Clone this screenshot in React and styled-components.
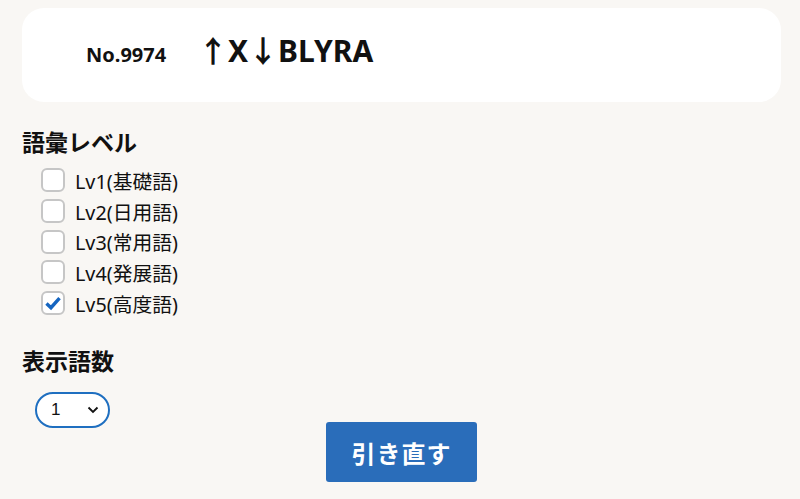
import styled, { createGlobalStyle } from "styled-components";

const GlobalStyle = createGlobalStyle`
  html, body {
    margin: 0;
    padding: 0;
    background: #f9f7f4;
  }
  body {
    font-family: "Noto Sans", "Noto Sans CJK JP", sans-serif;
    color: #111;
  }
`;

const Page = styled.div`
  padding: 8px 18px 0 22px;
`;

const Card = styled.div`
  background: #fff;
  border-radius: 22px;
  height: 94px;
  display: flex;
  align-items: baseline;
  padding: 28px 0 0 64px;
  box-sizing: border-box;
  width: 759px;
`;

const Number = styled.span`
  font-size: 20px;
  font-weight: 700;
  line-height: 1;
  width: 112px;
`;

const Word = styled.span`
  font-size: 30px;
  font-weight: 700;
  line-height: 1;
`;

const Heading = styled.h2`
  font-family: "Noto Sans CJK JP", sans-serif;
  font-size: 23px;
  font-weight: 700;
  margin: ${(p) => p.$top}px 0 0 0;
  line-height: 32px;
`;

const CheckList = styled.div`
  display: flex;
  flex-direction: column;
  margin: 8px 0 0 19px;
`;

const CheckRow = styled.label`
  display: flex;
  align-items: center;
  height: 30.7px;
  font-size: 19.8px;
`;

const Box = styled.span`
  width: 20px;
  height: 20px;
  border: 2px solid #c6c6c6;
  border-radius: 6px;
  background: #fff;
  display: flex;
  align-items: center;
  justify-content: center;
  margin-right: 10px;
`;

const SelectWrap = styled.div`
  margin: 16px 0 0 13px;
  width: 75px;
  height: 36px;
  box-sizing: border-box;
  border: 2px solid #1f6fc0;
  border-radius: 18px;
  background: #fff;
  display: flex;
  align-items: center;
  justify-content: space-between;
  padding: 0 9px 0 14px;
  font-family: "Liberation Sans", sans-serif;
  font-size: 17px;
`;

const ButtonRow = styled.div`
  display: flex;
  justify-content: center;
  margin-top: -6px;
  padding-right: 1px;
`;

const Button = styled.button`
  width: 151px;
  height: 60px;
  background: #2a6dba;
  color: #fff;
  border: none;
  border-radius: 3px;
  font-family: "Noto Sans CJK JP", sans-serif;
  font-size: 24px;
  font-weight: 700;
  letter-spacing: 1px;
  padding: 0;
`;

const levels = ["Lv1(基礎語)", "Lv2(日用語)", "Lv3(常用語)", "Lv4(発展語)", "Lv5(高度語)"];

const App = () => {
  return (
    <Page>
      <GlobalStyle />
      <Card>
        <Number>No.9974</Number>
        <Word>↑X↓BLYRA</Word>
      </Card>
      <Heading $top={23}>語彙レベル</Heading>
      <CheckList>
        {levels.map((l, i) => (
          <CheckRow key={l}>
            <Box>
              {i === 4 && (
                <svg width="18" height="18" viewBox="0 0 16 16">
                  <path d="M2.2 8.4 L6.2 12.2 L13.8 3.6" fill="none" stroke="#1565c0" strokeWidth="3" />
                </svg>
              )}
            </Box>
            {l}
          </CheckRow>
        ))}
      </CheckList>
      <Heading $top={26}>表示語数</Heading>
      <SelectWrap>
        <span>1</span>
        <svg width="12" height="8" viewBox="0 0 12 8">
          <path d="M1.5 1.5 L6 6 L10.5 1.5" fill="none" stroke="#111" strokeWidth="1.8" />
        </svg>
      </SelectWrap>
      <ButtonRow>
        <Button>引き直す</Button>
      </ButtonRow>
    </Page>
  );
};

export default App;
